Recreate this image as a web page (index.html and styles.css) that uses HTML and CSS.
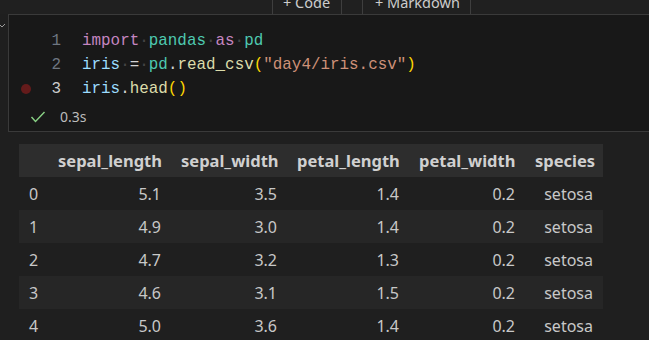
FILE: index.html
```html
<!DOCTYPE html>
<html>
<head>
  <title>iris notebook</title>
  <link rel="stylesheet" href="styles.css">
</head>
<body>
  <div class="toolbar">
    <div class="tool-button"><span>+ Code</span></div>
    <div class="tool-button wide"><span>+ Markdown</span></div>
  </div>

  <div class="cell">
    <svg class="chevron" width="8" height="6" viewBox="0 0 8 6"><path d="M1 1 L4 4 L7 1" fill="none" stroke="#9a9a9a" stroke-width="1"/></svg>
    <div class="code">
      <div class="line">
        <span class="gutter"></span>
        <span class="num">1</span>
        <span class="src"><span class="kw">import</span><span class="ws">·</span><span class="mod">pandas</span><span class="ws">·</span><span class="kw">as</span><span class="ws">·</span><span class="mod">pd</span></span>
      </div>
      <div class="line">
        <span class="gutter"></span>
        <span class="num">2</span>
        <span class="src"><span class="var">iris</span><span class="ws">·</span><span class="op">=</span><span class="ws">·</span><span class="mod">pd</span><span class="op">.</span><span class="fn">read_csv</span><span class="br">(</span><span class="str">"day4/iris.csv"</span><span class="br">)</span></span>
      </div>
      <div class="line">
        <span class="gutter"><span class="breakpoint"></span></span>
        <span class="num active">3</span>
        <span class="src"><span class="var">iris</span><span class="op">.</span><span class="fn">head</span><span class="br">()</span></span>
      </div>
    </div>
    <div class="status">
      <svg width="16" height="12" viewBox="0 0 16 12"><path d="M1.5 6 L5.5 10.5 L14.5 1" fill="none" stroke="#89d185" stroke-width="1.4"/></svg>
      <span>0.3s</span>
    </div>
  </div>

  <table class="frame">
    <colgroup>
      <col style="width:29px">
      <col style="width:123px">
      <col style="width:116px">
      <col style="width:122px">
      <col style="width:116px">
      <col style="width:78px">
    </colgroup>
    <thead>
      <tr><th></th><th>sepal_length</th><th>sepal_width</th><th>petal_length</th><th>petal_width</th><th>species</th></tr>
    </thead>
    <tbody id="rows"></tbody>
  </table>

  <script>
    const data = [
      [0, '5.1', '3.5', '1.4', '0.2', 'setosa'],
      [1, '4.9', '3.0', '1.4', '0.2', 'setosa'],
      [2, '4.7', '3.2', '1.3', '0.2', 'setosa'],
      [3, '4.6', '3.1', '1.5', '0.2', 'setosa'],
      [4, '5.0', '3.6', '1.4', '0.2', 'setosa']
    ];

    const rowsElement = document.getElementById('rows');

    data.forEach(function (row) {
      const tr = document.createElement('tr');
      row.forEach(function (value) {
        const td = document.createElement('td');
        td.textContent = value;
        tr.appendChild(td);
      });
      rowsElement.appendChild(tr);
    });
  </script>
</body>
</html>
```

FILE: styles.css
```css
body {
  margin: 0;
  background-color: #1f1f1f;
  color: #cccccc;
  font-family: "Noto Sans", "Open Sans", sans-serif;
  overflow: hidden;
}

.toolbar {
  display: flex;
  height: 14px;
  padding-left: 272px;
  gap: 20px;
  background-color: #202020;
}

.tool-button {
  width: 68px;
  height: 14px;
  border-left: 1px solid #3e3e3e;
  border-right: 1px solid #3e3e3e;
  overflow: hidden;
  font-size: 14.5px;
  line-height: 14px;
  color: #cccccc;
}

.tool-button span {
  display: block;
  margin-top: -5px;
  padding-left: 10px;
  white-space: nowrap;
}

.tool-button.wide {
  width: 105px;
  padding-left: 2px;
}

.cell {
  position: relative;
  margin-left: 8px;
  margin-right: -20px;
  height: 116px;
  border: 1px solid #3a3a3a;
  background-color: #181818;
}

.chevron {
  position: absolute;
  left: -11px;
  top: 8px;
}

.code {
  padding-top: 14px;
  font-family: "Liberation Mono", monospace;
  font-size: 15.9px;
}

.line {
  display: flex;
  align-items: center;
  height: 24px;
  white-space: pre;
}

.gutter {
  width: 22px;
  display: flex;
  justify-content: flex-end;
}

.breakpoint {
  width: 10px;
  height: 10px;
  border-radius: 50%;
  background-color: #641b1b;
}

.num {
  width: 30px;
  text-align: right;
  color: #6e7681;
}

.num.active {
  color: #cccccc;
}

.src {
  margin-left: 21px;
}

.kw { color: #c586c0; }
.mod { color: #4ec9b0; }
.var { color: #9cdcfe; }
.fn { color: #dcdcaa; }
.str { color: #ce9178; }
.br { color: #ffd700; }
.op { color: #d4d4d4; }
.ws { color: #454545; }

.status {
  display: flex;
  align-items: center;
  gap: 14px;
  margin-top: 6px;
  padding-left: 21px;
  font-size: 14px;
  color: #bcbcbc;
}

.frame {
  margin: 12px 0 0 19px;
  border-collapse: collapse;
  table-layout: fixed;
  width: 584px;
  font-size: 16px;
}

.frame th,
.frame td {
  height: 33px;
  padding: 0 10px;
  text-align: right;
  white-space: nowrap;
}

.frame th:first-child,
.frame td:first-child {
  text-align: left;
}

.frame thead tr {
  background-color: #2d2d2d;
}

.frame th {
  font-size: 16.5px;
  font-weight: bold;
  color: #d0d0d0;
}

.frame td {
  color: #c8c8c8;
}

.frame tbody tr:nth-child(even) {
  background-color: #262626;
}
```
